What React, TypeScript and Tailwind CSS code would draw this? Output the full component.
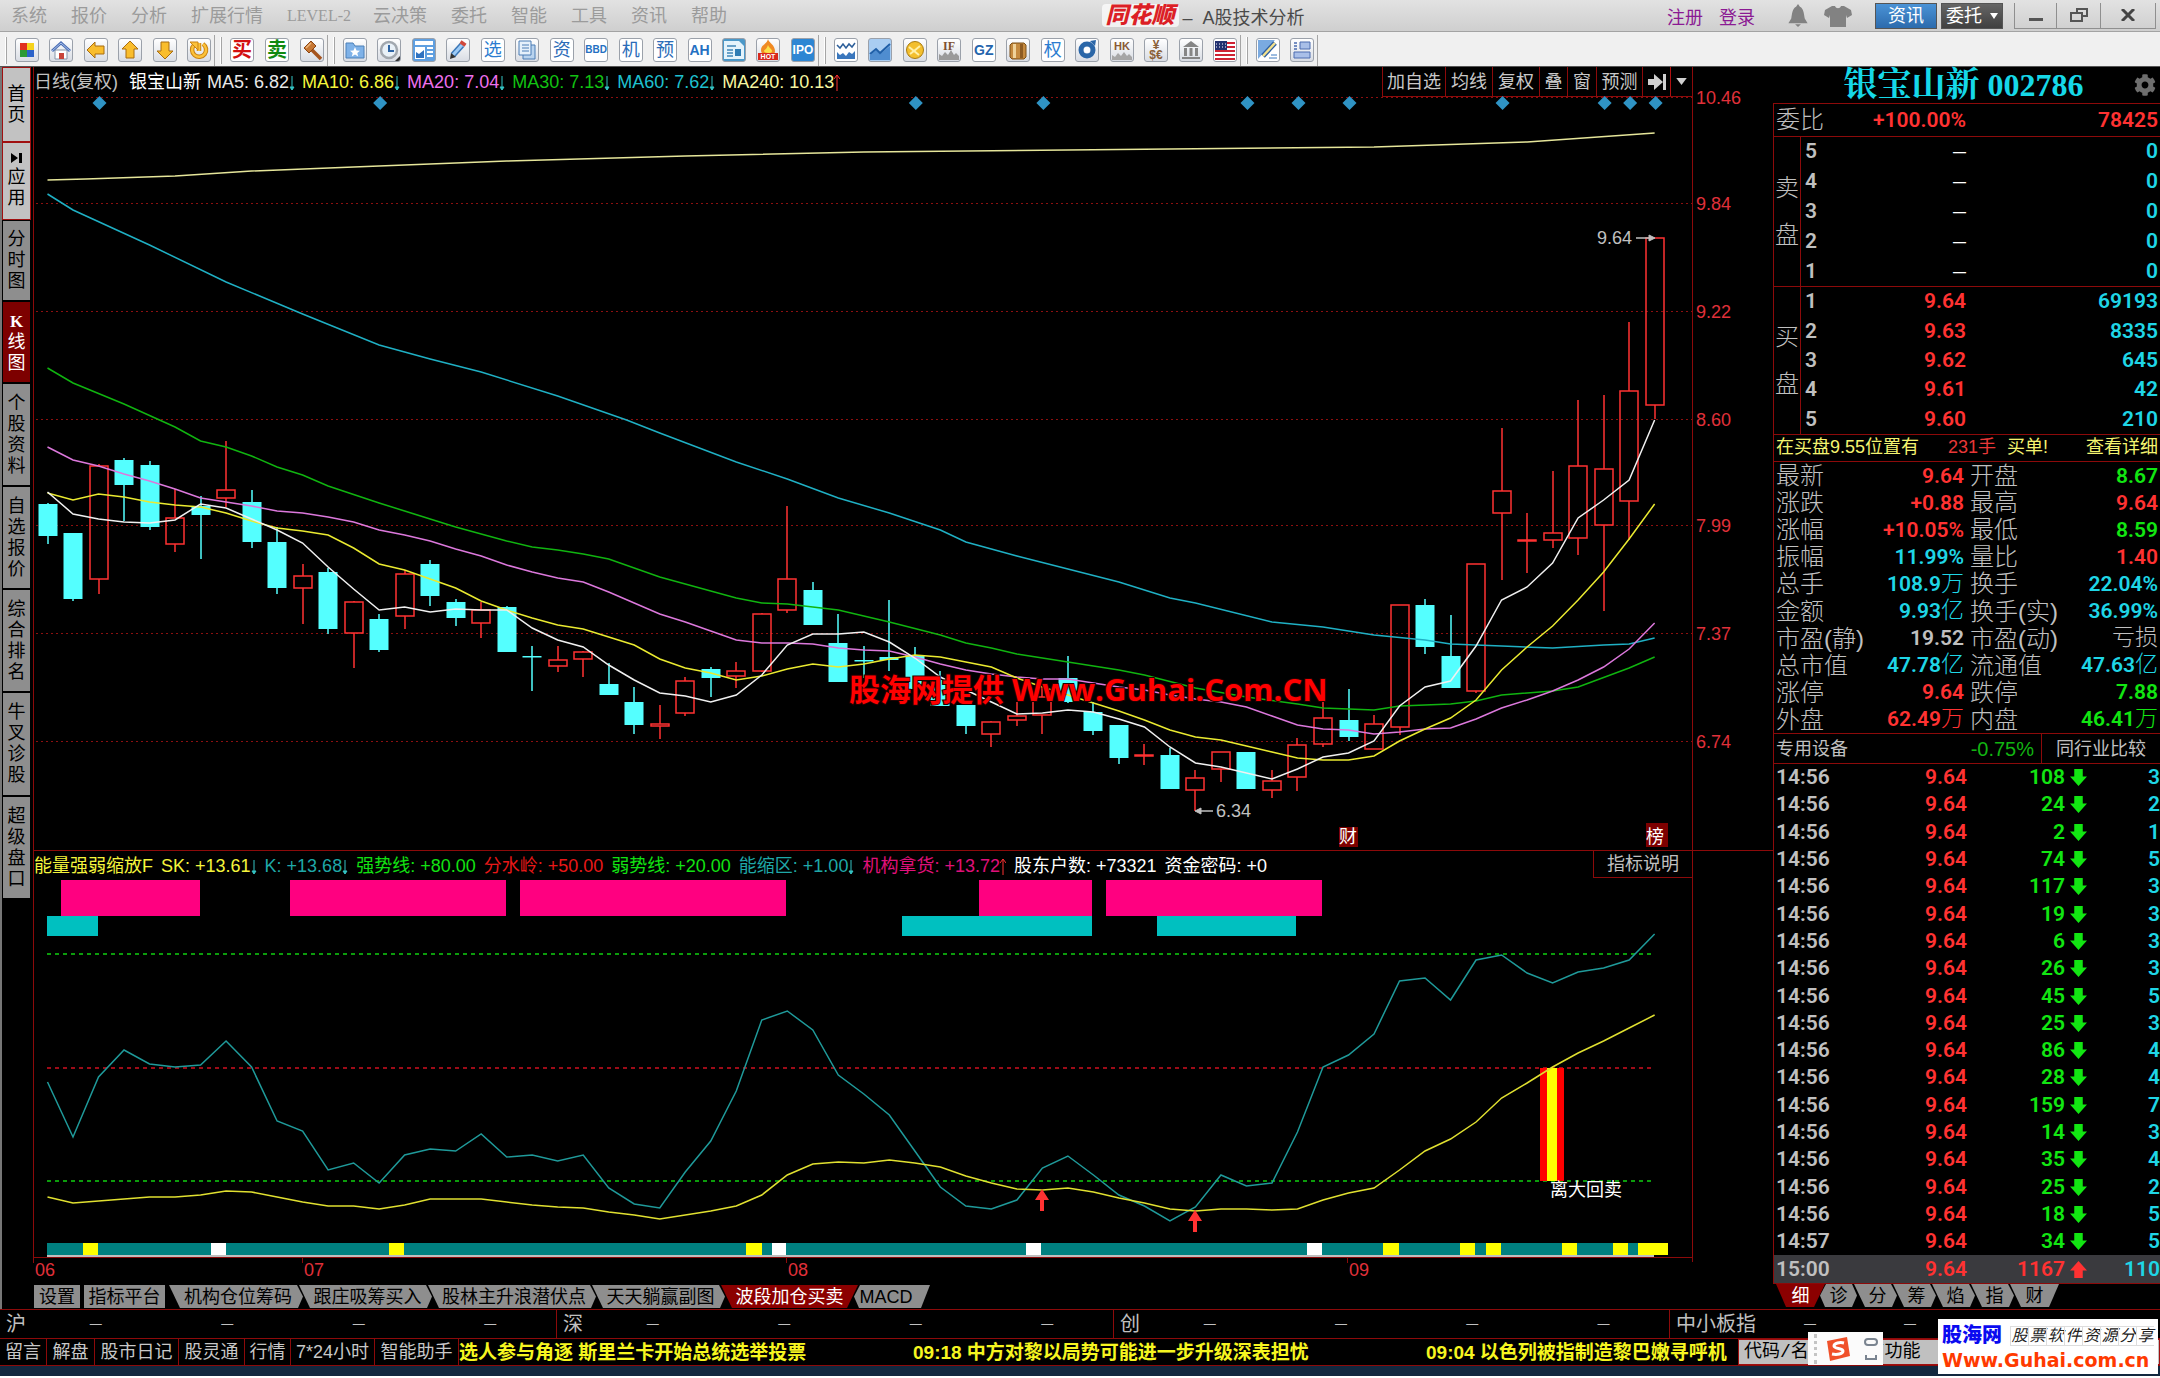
import type { ReactNode } from 'react';
import { FaCog } from 'react-icons/fa';

const SANS = "font-['Liberation_Sans','Noto_Sans_CJK_SC',sans-serif]";
const NUM = "font-['Roboto','Noto_Sans_CJK_SC',sans-serif] font-semibold";

const RED = '#ff3232';
const LINE = '#8c0a0a';

// ---------- chart data ----------
const STEP = 25.51;
const X0 = 47.5;
const cx = (i: number) => X0 + i * STEP;

// [up, high, bodyTop, bodyBottom, low]
const CANDLES: [number, number, number, number, number][] = [
  [0, 503, 504, 536, 544], [0, 533, 533, 599, 601], [1, 464, 466, 579, 594], [0, 458, 460, 485, 521],
  [0, 461, 465, 527, 530], [1, 489, 518, 544, 552], [0, 496, 506, 515, 559], [1, 441, 490, 498, 507],
  [0, 490, 502, 542, 548], [0, 527, 542, 588, 594], [1, 564, 576, 588, 624], [0, 568, 572, 629, 634],
  [1, 601, 602, 633, 668], [0, 614, 619, 650, 652], [1, 570, 574, 616, 629], [0, 560, 564, 596, 606],
  [0, 599, 602, 618, 626], [1, 602, 610, 623, 638], [0, 606, 607, 652, 652], [0, 646, 656, 657, 691],
  [1, 646, 660, 666, 672], [1, 651, 652, 659, 677], [0, 663, 684, 695, 695], [0, 687, 702, 725, 734],
  [1, 705, 724, 726, 739], [1, 677, 681, 713, 716], [0, 667, 669, 678, 697], [1, 662, 671, 676, 688],
  [1, 613, 614, 671, 672], [1, 506, 579, 610, 613], [0, 582, 590, 625, 625], [0, 614, 643, 682, 682],
  [0, 646, 660, 661, 678], [0, 600, 657, 660, 671], [0, 647, 655, 689, 689], [0, 671, 680, 706, 706],
  [0, 702, 705, 726, 734], [1, 721, 722, 734, 747], [1, 702, 716, 720, 726], [1, 686, 697, 715, 734],
  [0, 656, 678, 702, 703], [0, 702, 712, 731, 735], [0, 725, 725, 758, 764], [1, 744, 755, 756, 765],
  [0, 748, 755, 789, 789], [1, 770, 778, 790, 811], [1, 752, 752, 769, 782], [0, 752, 752, 789, 789],
  [1, 770, 781, 790, 798], [1, 738, 745, 777, 791], [1, 698, 718, 744, 747], [0, 689, 720, 737, 741],
  [1, 715, 724, 749, 749], [1, 605, 605, 727, 735], [0, 599, 605, 647, 654], [0, 615, 656, 688, 688],
  [1, 564, 564, 691, 693], [1, 428, 491, 513, 580], [1, 513, 540, 541, 573], [1, 471, 533, 540, 548],
  [1, 400, 466, 538, 555], [1, 395, 469, 525, 611], [1, 322, 391, 501, 540], [1, 238, 238, 405, 419],
];

const MA5 = [492, 514, 519, 522, 523, 520, 504, 508, 519, 530, 543, 567, 589, 610, 607, 612, 609, 610, 610, 628, 640, 647, 665, 680, 693, 696, 702, 695, 675, 645, 634, 634, 632, 642, 658, 677, 690, 702, 714, 713, 710, 712, 719, 727, 747, 763, 767, 773, 779, 769, 757, 753, 741, 706, 687, 681, 646, 600, 587, 563, 518, 500, 480, 420];
const MA10 = [493, 500, 494, 497, 502, 505, 507, 513, 521, 528, 531, 535, 548, 564, 570, 579, 588, 601, 610, 618, 625, 629, 637, 645, 659, 668, 673, 680, 676, 669, 664, 667, 664, 659, 655, 657, 662, 667, 678, 687, 695, 703, 711, 720, 730, 737, 740, 746, 752, 758, 760, 760, 756, 741, 729, 718, 700, 670, 647, 626, 600, 572, 539, 504];
const MA20 = [447, 460, 466, 474, 481, 489, 498, 502, 506, 511, 513, 517, 522, 530, 535, 541, 549, 556, 565, 572, 578, 582, 592, 603, 614, 622, 631, 640, 643, 643, 644, 648, 650, 651, 657, 664, 670, 674, 677, 679, 679, 683, 687, 690, 695, 699, 702, 707, 716, 725, 729, 730, 734, 732, 729, 728, 719, 708, 700, 691, 680, 667, 649, 623];
const MA30: [number, number][] = [[0, 368], [1, 383], [3, 404], [5, 427], [6, 441], [7, 447], [8, 456], [9, 467], [10, 475], [11, 486], [13, 503], [14, 511], [16, 527], [18, 541], [19, 547], [20, 550], [21, 554], [22, 559], [24, 577], [26, 591], [27, 598], [28, 603], [29, 604], [30, 607], [31, 610], [33, 622], [35, 635], [36, 643], [37, 648], [38, 654], [40, 662], [42, 670], [43, 675], [45, 688], [47, 697], [49, 704], [50, 708], [52, 710], [53, 706], [55, 704], [56, 701], [57, 695], [59, 691], [60, 687], [62, 668], [63, 657]];
const MA60: [number, number][] = [[0, 194], [1, 210], [4, 245], [7, 282], [10, 314], [13, 345], [15, 359], [17, 372], [20, 396], [22.7, 420], [24, 433], [27, 462], [29, 479], [31, 498], [33, 513], [35, 530], [36, 542], [38, 556], [40, 569], [42, 582], [44, 598], [45, 603], [48, 622], [50, 627], [52, 635], [54, 640], [55, 644], [57, 646], [59, 648], [61, 645], [62, 644], [63, 638]];
const MA240: [number, number][] = [[0, 180], [1.5, 179], [5, 176], [8, 171], [12, 167], [18, 161], [25, 156], [32, 152], [44, 149], [52, 147], [58, 142], [63, 133]];

const K = [1083, 1138, 1078, 1051, 1065, 1068, 1066, 1042, 1068, 1122, 1132, 1171, 1164, 1184, 1156, 1150, 1152, 1135, 1158, 1156, 1162, 1156, 1189, 1205, 1209, 1173, 1142, 1092, 1021, 1012, 1031, 1076, 1095, 1116, 1152, 1188, 1207, 1210, 1201, 1169, 1157, 1176, 1196, 1207, 1222, 1208, 1176, 1187, 1184, 1133, 1068, 1056, 1035, 982, 979, 1001, 961, 956, 974, 984, 973, 969, 961, 935];
const SK = [1198, 1204, 1202, 1200, 1198, 1198, 1196, 1192, 1193, 1198, 1203, 1207, 1207, 1210, 1206, 1200, 1200, 1200, 1203, 1206, 1208, 1209, 1213, 1216, 1220, 1216, 1212, 1207, 1196, 1176, 1165, 1163, 1164, 1161, 1164, 1168, 1177, 1184, 1190, 1191, 1189, 1193, 1199, 1204, 1210, 1212, 1210, 1210, 1211, 1210, 1201, 1194, 1189, 1171, 1152, 1140, 1123, 1099, 1084, 1068, 1054, 1042, 1029, 1016];

const AXIS: [string, number][] = [['10.46', 97], ['9.84', 203], ['9.22', 311], ['8.60', 419], ['7.99', 525], ['7.37', 633], ['6.74', 741]];
const DIAMONDS = [2, 13, 34, 39, 47, 49, 51, 57, 61, 62, 63];

const PINK = [[61, 200], [290, 506], [520, 786], [979, 1092], [1106, 1322]];
const TEAL = [[47, 98], [902, 1092], [1157, 1296]];
const YELLOW_MARKS = [[83, 98], [389, 404], [746, 762], [1383, 1399], [1460, 1475], [1486, 1501], [1562, 1577], [1613, 1628], [1638, 1668]];
const WHITE_MARKS = [[211, 226], [772, 786], [1026, 1041], [1307, 1322]];
const MONTHS: [string, number][] = [['06', 34], ['07', 303], ['08', 787], ['09', 1348]];

const pts = (ys: number[]) => ys.map((y, i) => `${cx(i)},${y}`).join(' ');
const ptsXY = (a: [number, number][]) => a.map(([i, y]) => `${cx(i)},${y}`).join(' ');

// ---------- title bar ----------
const MENU = ['系统', '报价', '分析', '扩展行情', 'LEVEL-2', '云决策', '委托', '智能', '工具', '资讯', '帮助'];

function TitleBar() {
  return (
    <header className="flex h-8 items-center border-b border-[#a3a3a3] bg-gradient-to-b from-[#e2e2e2] to-[#cfcfcf] text-[18px] leading-none">
      <nav className="flex w-[51%] gap-6 pl-[11px] text-[#9b9b9b]">
        {MENU.map((m) => (
          <button key={m} className={m === 'LEVEL-2' ? "w-[62px] whitespace-nowrap font-['Liberation_Serif',serif] text-[16px]" : 'whitespace-nowrap'}>
            {m}
          </button>
        ))}
      </nav>
      <div className="flex flex-1 items-center text-[#4a4a4a]">
        <span className="rounded-sm bg-white/70 px-1 text-[23px] font-black italic text-[#dc1f26]">同花顺</span>
        <span className="ml-1 whitespace-nowrap pt-1">– &nbsp;A股技术分析</span>
      </div>
      <div className="flex h-full items-center pr-1">
        <a href="#" className="mr-4 pt-1 text-[#8b1a93]">注册</a>
        <a href="#" className="mr-8 pt-1 text-[#8b1a93]">登录</a>
        <button aria-label="消息" className="mr-[14px]">
          <svg viewBox="0 0 22 26" className="block h-[25px] w-[22px] fill-[#828282]">
            <path d="M11 1l2 3c4 2 4 7 5 12l3 5H1l3-5c1-5 1-10 5-12z" />
            <path d="M8 22h6l-3 3z" />
          </svg>
        </button>
        <button aria-label="皮肤" className="mr-[22px]">
          <svg viewBox="0 0 30 24" className="block h-6 w-[30px] fill-[#828282]">
            <path d="M9 2h3c1 3 5 3 6 0h3l7 4 1 5-5 3-1-3v12H7V11l-1 3-5-3 1-5z" />
          </svg>
        </button>
        <button className="mr-1 h-[26px] w-[62px] border border-[#555] bg-gradient-to-b from-[#4b93d6] to-[#2c6bad] text-white">资讯</button>
        <button className="mr-[11px] flex h-[26px] w-[62px] items-center justify-center gap-2 border border-[#555] bg-gradient-to-b from-[#666] to-[#404040] text-white">
          委托
          <svg viewBox="0 0 8 6" className="h-[6px] w-2 fill-white"><path d="M0 0h8L4 6z" /></svg>
        </button>
        <div className="flex h-[26px] border-x border-b border-[#8f8f8f] text-[#444]">
          <button aria-label="最小化" className="flex w-[42px] items-center justify-center border-r border-[#8f8f8f]">
            <span className="mt-2 h-[3px] w-[14px] bg-[#555]" />
          </button>
          <button aria-label="还原" className="flex w-[44px] items-center justify-center border-r border-[#8f8f8f]">
            <svg viewBox="0 0 18 14" className="h-[14px] w-[18px] fill-none stroke-[#555] stroke-2"><path d="M7 5V1h10v7h-4M1 5h11v8H1z" /></svg>
          </button>
          <button aria-label="关闭" className="flex w-[54px] items-center justify-center">
            <svg viewBox="0 0 14 12" className="h-3 w-[14px] fill-none stroke-[#444] stroke-3"><path d="M1 0l12 12M13 0L1 12" /></svg>
          </button>
        </div>
      </div>
    </header>
  );
}

// ---------- icon toolbar ----------
function Tool({ label, children, tint }: { label: string; children: ReactNode; tint?: string }) {
  return (
    <button
      aria-label={label}
      className={`flex h-6 w-6 shrink-0 items-center justify-center overflow-hidden rounded-[3px] border border-[#9ba1aa] ${tint ?? 'bg-gradient-to-b from-white to-[#d9dde4]'}`}
    >
      {children}
    </button>
  );
}

function Ico({ children }: { children: ReactNode }) {
  return <svg viewBox="0 0 22 22" className="h-[22px] w-[22px] shrink-0 fill-none">{children}</svg>;
}

function ToolGroup({ width, children }: { width: string; children: ReactNode }) {
  return (
    <div className="flex h-[31px] items-center border-r border-[#a5a5a5] pr-[3px]">
      <span className="mr-2 ml-[5px] h-[27px] w-[2px] border-r border-[#a5a5a5] bg-white" />
      <div className={`flex justify-between ${width}`}>{children}</div>
    </div>
  );
}

function Char({ color, children }: { color: string; children: ReactNode }) {
  return <span className={`text-[18px] leading-none ${color}`}>{children}</span>;
}

function Toolbar() {
  const arrow = { fill: '#f9bd2d', stroke: '#a86c10', strokeWidth: 1 };
  return (
    <div className="flex h-[35px] items-center border-b border-[#555] bg-[#f0f0f0] pt-[2px]">
      <ToolGroup width="w-[196px]">
        <Tool label="板块">
          <Ico>
            <path fill="#e03020" d="M4 4h7v7H4z" /><path fill="#f5d21c" d="M11 4h7v7h-7z" />
            <path fill="#2c9a35" d="M4 11h7v7H4z" /><path fill="#2b62c9" d="M11 11h7v7h-7z" />
          </Ico>
        </Tool>
        <Tool label="首页">
          <Ico>
            <path fill="#fff" stroke="#8594a8" d="M5 11h12v9H5z" /><path fill="#c8443a" d="M9 14h5v6H9z" />
            <path stroke="#4c6fb5" strokeWidth="3" d="M2 12l9-8 9 8" /><path stroke="#a8c0ea" d="M2 12l9-8 9 8" />
          </Ico>
        </Tool>
        <Tool label="后退"><Ico><path {...arrow} d="M2 11l8-8v4h9v8h-9v4z" /></Ico></Tool>
        <Tool label="上页"><Ico><path {...arrow} d="M11 2l8 8h-4v9H7v-9H3z" /></Ico></Tool>
        <Tool label="下页"><Ico><path {...arrow} d="M11 20l-8-8h4V3h8v9h4z" /></Ico></Tool>
        <Tool label="刷新">
          <Ico>
            <path stroke="#c98314" strokeWidth="4.5" d="M6 6a7 7 0 1 0 9-1M11 4v8" /><path stroke="#fcc23a" strokeWidth="2.5" d="M6 6a7 7 0 1 0 9-1M11 4v8" />
            <path fill="#fcc23a" stroke="#c98314" d="M2 3h8v8z" />
          </Ico>
        </Tool>
      </ToolGroup>
      <ToolGroup width="w-[94px]">
        <Tool label="买入" tint="bg-white"><span className="text-[20px] leading-none font-bold text-[#d31010]">买</span></Tool>
        <Tool label="卖出" tint="bg-white"><span className="text-[20px] leading-none font-bold text-[#118a11]">卖</span></Tool>
        <Tool label="交易">
          <Ico>
            <path stroke="#a5541e" strokeWidth="3.5" d="M10 10l10 10" /><path fill="#c77835" stroke="#8a4413" d="M3 9l7-7 5 5-7 7z" />
            <path stroke="#f0b87c" strokeWidth="1.5" d="M5 9l5-5" />
          </Ico>
        </Tool>
      </ToolGroup>
      <ToolGroup width="w-[472px]">
        <Tool label="自选">
          <Ico>
            <path fill="#7fb2e8" stroke="#4c80b8" d="M2 4h7l2 3h9v12H2z" />
            <path fill="#fff" d="M11 8l1.500 3.500 3.500.3-2.700 2.300.9 3.400-3.200-1.900-3.200 1.900.9-3.400L6 11.800l3.500-.3z" />
          </Ico>
        </Tool>
        <Tool label="分时">
          <Ico><circle cx="11" cy="11" r="8" fill="#e9f1f8" stroke="#a2a8af" strokeWidth="2.500" /><path stroke="#2d64a5" strokeWidth="2" d="M11 6v6h5" /><path fill="#333" d="M22 17v5h-5z" /></Ico>
        </Tool>
        <Tool label="报表" tint="bg-[#5f9fe0]">
          <Ico><path fill="#fff" d="M2 2h18v4H2zM2 8h10v12H2zM14 8h6v2h-6zM14 12h6v2h-6zM14 16h6v2h-6z" /><path fill="#2f72c0" d="M3 13l3 2 5-4v8H3z" /></Ico>
        </Tool>
        <Tool label="画线">
          <Ico><path stroke="#3c78b8" strokeWidth="6" d="M6 16L15 6" /><path stroke="#9dcbf6" strokeWidth="3" d="M6 16L15 6" /><path stroke="#d0483c" strokeWidth="6" d="M15 6l2-3" /><path fill="#333" d="M3 20l1-6 5 4z" /></Ico>
        </Tool>
        <Tool label="选股" tint="bg-white"><Char color="text-[#2b7cd0]">选</Char></Tool>
        <Tool label="公告">
          <Ico><path fill="#b9d3ee" stroke="#4a7db5" d="M7 6h12v14H7z" /><path fill="#e5f0fb" stroke="#4a7db5" d="M3 2h12v14H3z" /><path stroke="#4a7db5" d="M6 6h7M6 9h7M6 12h7" /></Ico>
        </Tool>
        <Tool label="资金" tint="bg-white"><Char color="text-[#2b6cb8]">资</Char></Tool>
        <Tool label="BBD" tint="bg-white">
          <span className="text-[10px] leading-none font-bold text-[#2470c2]">BBD</span>
        </Tool>
        <Tool label="机构" tint="bg-white"><Char color="text-[#2b6cb8]">机</Char></Tool>
        <Tool label="预测" tint="bg-white"><Char color="text-[#2b6cb8]">预</Char></Tool>
        <Tool label="AH" tint="bg-white"><span className="text-[14px] leading-none font-bold text-[#2470c2]">AH</span></Tool>
        <Tool label="新闻" tint="bg-[#4b98c8]">
          <Ico><path fill="#e4f3fb" d="M1 2h15l5 5v13H1z" /><path stroke="#3f86b8" strokeWidth="1.500" d="M4 7h9M4 11h6M4 14h6M4 17h6" /><path fill="#2f7db4" d="M12 10h6v7h-6z" /></Ico>
        </Tool>
        <Tool label="热点">
          <svg viewBox="0 0 22 22" className="h-[22px] w-[22px]">
            <path fill="#f08a24" d="M11 0c1 4 7 6 7 12 0 3-2 4-7 4s-7-2-7-5c0-5 6-6 7-11z" /><path fill="#fce04a" d="M11 6c1 3 4 4 4 6s-2 2-4 2-4-1-4-2 3-2 4-6z" />
            <path fill="#d8281c" d="M1 14h20v7H1z" /><text x="11" y="20" textAnchor="middle" fontSize="7" fontWeight="700" fill="#fff">HOT</text>
          </svg>
        </Tool>
        <Tool label="新股" tint="bg-[#2d86d3]"><span className="text-[12px] leading-none font-bold text-white">IPO</span></Tool>
      </ToolGroup>
      <ToolGroup width="w-[403px]">
        <Tool label="大盘" tint="bg-white">
          <Ico><path stroke="#2d5f9a" strokeWidth="1.500" d="M2 6l3 3 3-4 3 4 3-4 3 3 3-4" /><path fill="#3a77bd" d="M2 20v-7l3 3 3-2 3 3 3-4 3 2 3-3v8z" /></Ico>
        </Tool>
        <Tool label="走势" tint="bg-[#a9cdf2]">
          <Ico><path fill="#4f8dd0" d="M1 21v-5l6-5 4 4 10-8v14z" /><path stroke="#1f5fa8" strokeWidth="2" d="M1 15l6-5 4 4L21 5" /></Ico>
        </Tool>
        <Tool label="期货"><Ico><circle cx="11" cy="11" r="8.500" fill="#f3bf2e" stroke="#a87b12" /><path stroke="#fff0a8" strokeWidth="2" d="M5 8l5 4 6-5M6 15l4-3 5 4" /></Ico></Tool>
        <Tool label="股指">
          <svg viewBox="0 0 22 22" className="h-[22px] w-[22px]"><path fill="#9a9a9a" d="M1 21v-6l3 2 3-4 3 3 3-5 3 5 2-2 3 3v4z" /><text x="11" y="11" textAnchor="middle" fontSize="12" fontWeight="700" fontFamily="Liberation Serif" fill="#7d5030">IF</text></svg>
        </Tool>
        <Tool label="国债" tint="bg-white"><span className="text-[14px] leading-none font-bold text-[#2465ad]">GZ</span></Tool>
        <Tool label="商品"><Ico><path fill="#c58a3f" stroke="#7c5018" d="M5 4h12l2 2v12l-2 2H5l-2-2V6z" /><path fill="#efd29a" d="M6 5h3v14H6z" /><path fill="#8d5b22" d="M13 5h3v14h-3z" /></Ico></Tool>
        <Tool label="期权" tint="bg-white"><Char color="text-[#2b7cd0]">权</Char></Tool>
        <Tool label="基金"><Ico><circle cx="11" cy="11" r="6" stroke="#2a66a8" strokeWidth="5" /><circle cx="11" cy="11" r="3" fill="#fff" /><path fill="#2a66a8" d="M14 2l6-1-1 6z" /></Ico></Tool>
        <Tool label="港股">
          <svg viewBox="0 0 22 22" className="h-[22px] w-[22px]"><path fill="#a6a6a6" d="M1 21v-5l3 2 3-4 3 3 3-4 3 4 2-2 3 3v3z" /><text x="11" y="11" textAnchor="middle" fontSize="11" fontWeight="700" fill="#8a5a34">HK</text></svg>
        </Tool>
        <Tool label="外汇">
          <svg viewBox="0 0 22 22" className="h-[22px] w-[22px]"><g textAnchor="middle" fontSize="12" fontWeight="700" fill="#8a6038"><text x="11" y="10">¥</text><text x="11" y="20">$€</text></g></svg>
        </Tool>
        <Tool label="宏观"><Ico><path fill="#868686" d="M11 2l8 6H3zM4 9h3v8H4zM9.500 9h3v8h-3zM15 9h3v8h-3zM2 18h18v2H2z" /></Ico></Tool>
        <Tool label="美股" tint="bg-white">
          <Ico><path stroke="#cf2233" strokeWidth="2" d="M1 4h20M1 8h20M1 12h20M1 16h20M1 20h20" /><path fill="#22316f" d="M1 2h12v9H1z" /><path stroke="#fff" strokeDasharray="1 2" d="M2 5h10M2 8h10" /></Ico>
        </Tool>
      </ToolGroup>
      <ToolGroup width="w-[58px]">
        <Tool label="公式" tint="bg-white">
          <Ico><path fill="#7aaae0" d="M1 1h17L1 20z" /><path stroke="#2d5fa2" strokeWidth="5" d="M6 17L18 4" /><path stroke="#f2e08c" strokeWidth="2.500" d="M6 17L18 4" /><path stroke="#3a78c0" d="M12 19h8M14 16h6" /></Ico>
        </Tool>
        <Tool label="版面">
          <Ico><path stroke="#4c6cb0" strokeWidth="1.500" d="M3 4h3M3 7h3M3 10h3" /><path fill="#a9bfe8" stroke="#4c6cb0" d="M9 3h10v7H9zM3 13h16v6H3z" /></Ico>
        </Tool>
      </ToolGroup>
    </div>
  );
}

// ---------- left side tabs ----------
const SIDE: { text: string; cls: string }[] = [
  { text: '首页', cls: 'h-[75px] border-[#a01010] bg-[#c2c2c2] text-black' },
  { text: '应用', cls: 'h-[78px] border-[#a01010] bg-[#c2c2c2] text-black' },
  { text: '分时图', cls: 'h-[81px] border-black bg-[#8e8e8e] text-black' },
  { text: '线图', cls: 'h-[82px] border-black bg-[#7d0000] text-white' },
  { text: '个股资料', cls: 'h-[103px] border-black bg-[#8e8e8e] text-black' },
  { text: '自选报价', cls: 'h-[103px] border-black bg-[#8e8e8e] text-black' },
  { text: '综合排名', cls: 'h-[103px] border-black bg-[#8e8e8e] text-black' },
  { text: '牛叉诊股', cls: 'h-[104px] border-black bg-[#8e8e8e] text-black' },
  { text: '超级盘口', cls: 'h-[103px] border-black bg-[#8e8e8e] text-black' },
];

function SideTabs() {
  return (
    <nav className="w-[33px] shrink-0 border-l-2 border-[#777] pr-[2px]">
      {SIDE.map((s) => (
        <button key={s.text} className={`flex w-full flex-col items-center justify-center border text-[18px] leading-[21px] ${s.cls}`}>
          {s.text === '线图' && <span className="font-['Liberation_Serif',serif] text-[17px] font-bold">K</span>}
          {s.text === '应用' && (
            <svg viewBox="0 0 12 10" className="mb-1 h-[10px] w-3 fill-black"><path d="M0 0l7 5-7 5zM8 0h3v10H8z" /></svg>
          )}
          <span className="w-[18px] break-all">{s.text}</span>
        </button>
      ))}
    </nav>
  );
}

// ---------- centre ----------
function Down() {
  return <svg viewBox="0 0 6 18" className="h-[18px] w-[6px] shrink-0 fill-none stroke-[#35c4c4]"><path d="M3 3v12" /><path fill="#35c4c4" d="M1 14h4l-2 3z" /></svg>;
}

function Up() {
  return <svg viewBox="0 0 6 18" className="h-[18px] w-[6px] shrink-0 fill-none stroke-[#ff3232]"><path d="M3 2v16M0 6l3-4 3 4" /></svg>;
}

const MAS = [
  { t: 'MA5: 6.82', c: 'text-[#e8e8e8]' },
  { t: 'MA10: 6.86', c: 'text-[#f5f53c]' },
  { t: 'MA20: 7.04', c: 'text-[#ee70ee]' },
  { t: 'MA30: 7.13', c: 'text-[#12c212]' },
  { t: 'MA60: 7.62', c: 'text-[#1fc0cf]' },
  { t: 'MA240: 10.13', c: 'text-[#f6f6a0]' },
];

const CHART_BTNS = [
  { t: '加自选', w: 'w-[63px]' }, { t: '均线', w: 'w-[47px]' }, { t: '复权', w: 'w-[47px]' },
  { t: '叠', w: 'w-[28px]' }, { t: '窗', w: 'w-[29px]' }, { t: '预测', w: 'w-[46px]' },
];

function ChartHeader() {
  return (
    <div className="mr-[80px] flex h-[30px] items-center border-x border-[#8c0a0a] whitespace-nowrap">
      <span className="text-[#c0c0c0]">日线(复权)</span>
      <span className="mr-[6px] ml-[11px] text-white">银宝山新</span>
      <div className="flex gap-[7px]">
        {MAS.map((m, i) => (
          <span key={m.t} className={`flex items-center ${m.c}`}>
            {m.t}
            {i < 5 ? <Down /> : <Up />}
          </span>
        ))}
      </div>
      <div className="ml-auto flex h-full border-b border-[#8c0a0a] text-[#c8c8c8]">
        {CHART_BTNS.map((b) => (
          <button key={b.t} className={`border-l border-[#8c0a0a] ${b.w}`}>{b.t}</button>
        ))}
        <button aria-label="末页" className="flex w-[28px] items-center justify-center border-l border-[#8c0a0a]">
          <svg viewBox="0 0 20 20" className="h-5 w-5 fill-[#d0d0d0]"><path d="M1 7h6V2l9 8-9 8v-5H1zM16 2h3v16h-3z" /></svg>
        </button>
        <button aria-label="更多" className="flex w-[22px] items-center justify-center border-l border-[#b01010]">
          <svg viewBox="0 0 12 8" className="h-[7px] w-[11px] fill-[#d0d0d0]"><path d="M0 0h12L6 8z" /></svg>
        </button>
      </div>
    </div>
  );
}

function KChart() {
  return (
    <svg viewBox="33 97 1740 753" className="block h-auto w-full overflow-visible" fontFamily="Liberation Sans, Noto Sans CJK SC, sans-serif" fontSize="18">
      <path d="M33.500 97V850M1692.500 97V850" stroke={LINE} />
      {AXIS.map(([t, y]) => (
        <g key={t}>
          <path d={`M36 ${y + 0.5}H1692`} stroke="#8c1010" strokeDasharray="2 3" />
          <text x="1696" y={y + 7} fill="#e0303a">{t}</text>
        </g>
      ))}
      {DIAMONDS.map((i) => (
        <path key={i} d={`M${cx(i) + 1} 96l7 7-7 7-7-7z`} fill="#2f93c4" />
      ))}
      {CANDLES.map(([up, h, t, b, l], i) => {
        const x = Math.round(cx(i));
        return up ? (
          <g key={i} stroke={RED} strokeWidth="1.500" fill="none">
            <path d={`M${x} ${h}V${t}M${x} ${b}V${l}`} />
            <rect x={x - 9} y={t} width="18" height={b - t} />
          </g>
        ) : (
          <g key={i} fill="#54ffff">
            <rect x={x - 0.75} y={h} width="1.500" height={l - h} />
            <rect x={x - 9.500} y={t} width="19" height={Math.max(b - t, 1.5)} />
          </g>
        );
      })}
      <g fill="none" strokeWidth="1.500">
        <polyline points={ptsXY(MA240)} stroke="#e6e69a" />
        <polyline points={ptsXY(MA60)} stroke="#1fb0c4" />
        <polyline points={ptsXY(MA30)} stroke="#10b410" />
        <polyline points={pts(MA20)} stroke="#dc78dc" />
        <polyline points={pts(MA10)} stroke="#eaea30" />
        <polyline points={pts(MA5)} stroke="#f0f0f0" />
      </g>
      <g fill="#c0c0c0" stroke="#c0c0c0">
        <path d="M1636 238h14M1197 811h16" strokeWidth="1.500" />
        <path d="M1655 238l-6-3v6zM1195 811l6-3v6z" />
      </g>
      <text x="1597" y="244" fill="#c0c0c0">9.64</text>
      <text x="1216" y="817" fill="#c0c0c0">6.34</text>
      <rect x="1339" y="827" width="19" height="20" fill="#7d0000" />
      <text x="1339" y="843" fill="#fff">财</text>
      <rect x="1646" y="823" width="22" height="24" fill="#7d0000" />
      <text x="1646" y="843" fill="#fff">榜</text>
      <text x="849" y="701" fontSize="31" fontWeight="700" fill="#ff0000" stroke="#200000" strokeWidth="2" paintOrder="stroke" fontFamily="Open Sans, Noto Sans CJK SC, sans-serif">
        股海网提供 Www.Guhai.Com.CN
      </text>
    </svg>
  );
}

const IND: { t: string; c: string; a?: string }[] = [
  { t: '能量强弱缩放F', c: 'text-[#f5f53c]' },
  { t: 'SK: +13.61', c: 'text-[#f5f53c]', a: 'd' },
  { t: 'K: +13.68', c: 'text-[#1fa8a8]', a: 'd' },
  { t: '强势线: +80.00', c: 'text-[#12e212]' },
  { t: '分水岭: +50.00', c: 'text-[#e81818]' },
  { t: '弱势线: +20.00', c: 'text-[#12e212]' },
  { t: '能缩区: +1.00', c: 'text-[#1fa8a8]', a: 'd' },
  { t: '机构拿货: +13.72', c: 'text-[#e0107a]', a: 'u' },
  { t: '股东户数: +73321', c: 'text-white' },
  { t: '资金密码: +0', c: 'text-white' },
];

function IndicatorHeader() {
  return (
    <div className="border-t border-[#8c0a0a]">
      <div className="mr-[80px] flex h-[29px] items-center gap-2 border-x border-[#8c0a0a] whitespace-nowrap">
        {IND.map((m) => (
          <span key={m.t} className={`flex items-center ${m.c}`}>
            {m.t}
            {m.a === 'd' && <Down />}
            {m.a === 'u' && <Up />}
          </span>
        ))}
        <button className="ml-auto h-[27px] w-[99px] self-start border-b border-l border-[#8c0a0a] text-[#c0c0c0]">指标说明</button>
      </div>
    </div>
  );
}

function IndicatorChart() {
  return (
    <svg viewBox="33 881 1740 405" className="block h-auto w-full" fontFamily="Liberation Sans, Noto Sans CJK SC, sans-serif" fontSize="18">
      <path d="M33.500 881V1263M1692.500 881V1263M33 1258.500H1693" stroke={LINE} />
      {PINK.map(([a, b]) => <rect key={a} x={a} y="881" width={b - a} height="36" fill="#ff0080" />)}
      {TEAL.map(([a, b]) => <rect key={a} x={a} y="917" width={b - a} height="20" fill="#00c0c0" />)}
      <g strokeDasharray="4 4" strokeWidth="1.500">
        <path d="M47 955H1654" stroke="#10d010" />
        <path d="M47 1069H1654" stroke="#d01020" />
        <path d="M47 1182H1654" stroke="#10d010" />
      </g>
      <rect x="1540" y="1069" width="24" height="113" fill="#ff0000" />
      <rect x="1547" y="1069" width="10" height="113" fill="#ffff00" />
      <g fill="none" strokeWidth="1.500">
        <polyline points={pts(K)} stroke="#1f9a9a" />
        <polyline points={pts(SK)} stroke="#e0e030" />
      </g>
      <path d="M1042 1190l7 11h-5v11h-4v-11h-5zM1195 1211l7 11h-5v11h-4v-11h-5z" fill={RED} />
      <text x="1550" y="1197" fill="#fff">离大回卖</text>
      <rect x="47" y="1244" width="1621" height="12" fill="#008080" />
      {YELLOW_MARKS.map(([a, b]) => <rect key={a} x={a} y="1244" width={b - a} height="12" fill="#ffff00" />)}
      {WHITE_MARKS.map(([a, b]) => <rect key={a} x={a} y="1244" width={b - a} height="12" fill="#fff" />)}
      <path d="M47 1257H1654" stroke="#fff" strokeWidth="1.500" />
      {MONTHS.map(([t, x]) => (
        <g key={t}>
          <path d={`M${x - 0.5} 1258v6`} stroke={LINE} />
          <text x={x + 1} y="1277" fill="#e0303a">{t}</text>
        </g>
      ))}
    </svg>
  );
}

const SLANT = '[clip-path:polygon(0_0,calc(100%-6px)_0,100%_50%,calc(100%-5px)_100%,11px_100%)]';
const TABS = [
  { t: '机构仓位筹码', w: 'w-[134px]' },
  { t: '跟庄吸筹买入', w: 'w-[133px]' },
  { t: '股林主升浪潜伏点', w: 'w-[168px]' },
  { t: '天天躺赢副图', w: 'w-[133px]' },
];

function FormulaTabs() {
  return (
    <div className="flex h-[23px] pl-[1px] text-black">
      <button className="mr-1 w-[46px] bg-[#8e8e8e]">设置</button>
      <button className="mr-[4px] w-[81px] bg-[#8e8e8e]">指标平台</button>
      {TABS.map((t) => (
        <button key={t.t} className={`-mr-1 bg-[#8e8e8e] pl-1 whitespace-nowrap ${t.w} ${SLANT}`}>{t.t}</button>
      ))}
      <button className="w-[137px] bg-[#8b0000] text-white [clip-path:polygon(0_0,100%_0,calc(100%-11px)_100%,11px_100%)]">波段加仓买卖</button>
      <button className="-ml-1 w-[76px] bg-[#8e8e8e] pr-3 [clip-path:polygon(6px_0,100%_0,calc(100%-9px)_100%,5px_100%,0_50%)]">MACD</button>
    </div>
  );
}

// ---------- right panel ----------
const SELL = ['5', '4', '3', '2', '1'].map((n) => [n, '—', '0']);
const BUY = [['1', '9.64', '69193'], ['2', '9.63', '8335'], ['3', '9.62', '645'], ['4', '9.61', '42'], ['5', '9.60', '210']];

function Book({ side, rows, height }: { side: string; rows: string[][]; height: string }) {
  return (
    <div className={`flex border-t border-[#8c0a0a] ${height}`}>
      <div className="flex w-[27px] flex-col items-center justify-center gap-[23px] border-r border-[#8c0a0a] text-[24px] leading-6 font-light text-[#c0c0c0]">
        {side.split('').map((c) => <span key={c}>{c}</span>)}
      </div>
      <table className={`h-full flex-1 table-fixed text-[21px] leading-[27px] ${NUM}`}>
        <tbody>
          {rows.map(([n, p, v]) => (
            <tr key={n}>
              <td className="w-[40px] py-0 pl-1 text-[#c0c0c0]">{n}</td>
              {p === '—' ? (
                <td className="w-[125px] text-right font-['Liberation_Sans',sans-serif] text-[13px] text-white">{p}</td>
              ) : (
                <td className="w-[125px] text-right text-[#ff3232]">{p}</td>
              )}
              <td className="pr-[2px] text-right text-[#1fd6e6]">{v}</td>
            </tr>
          ))}
        </tbody>
      </table>
    </div>
  );
}

const R = 'text-[#ff3232]';
const G = 'text-[#12e612]';
const C = 'text-[#1fd6e6]';
const W = 'text-[#c0c0c0]';
const STATS: [string, string, string, string, string, string][] = [
  ['最新', '9.64', R, '开盘', '8.67', G],
  ['涨跌', '+0.88', R, '最高', '9.64', R],
  ['涨幅', '+10.05%', R, '最低', '8.59', G],
  ['振幅', '11.99%', C, '量比', '1.40', R],
  ['总手', '108.9万', C, '换手', '22.04%', C],
  ['金额', '9.93亿', C, '换手(实)', '36.99%', C],
  ['市盈(静)', '19.52', W, '市盈(动)', '亏损', W],
  ['总市值', '47.78亿', C, '流通值', '47.63亿', C],
  ['涨停', '9.64', R, '跌停', '7.88', G],
  ['外盘', '62.49万', R, '内盘', '46.41万', G],
];

function Value({ v }: { v: string }) {
  const m = v.match(/^([\d.+%-]*)(.*)$/);
  return (
    <>
      <span className={NUM}>{m?.[1]}</span>
      <span className="text-[23px] leading-none font-light">{m?.[2]}</span>
    </>
  );
}

const VOLS = [[108, 3], [24, 2], [2, 1], [74, 5], [117, 3], [19, 3], [6, 3], [26, 3], [45, 5], [25, 3], [86, 4], [28, 4], [159, 7], [14, 3], [35, 4], [25, 2], [18, 5], [34, 5], [1167, 110]];
const TICKS = VOLS.map(([v, n], i) => ({ time: i < 17 ? '14:56' : i === 17 ? '14:57' : '15:00', v, n, up: i === 18 }));

function QuotePanel() {
  return (
    <aside className="flex w-[387px] shrink-0 flex-col">
      <div className="flex h-9 items-center font-['Liberation_Serif','Noto_Serif_CJK_SC','Noto_Sans_CJK_SC',serif] text-[32px] leading-none font-bold text-[#16d8e8]">
        <h1 className="flex-1 pl-5 text-center whitespace-nowrap"><span className="text-[34px]">银宝山新</span> 002786</h1>
        <button aria-label="设置" className="mr-1 text-[22px] text-[#6e6e6e]"><FaCog /></button>
      </div>
      <div className="border-l border-[#8c0a0a]">
        <div className="flex h-[33px] items-center border-t border-[#8c0a0a] px-[2px]">
          <span className="w-[90px] text-[24px] leading-none font-light text-[#c0c0c0]">委比</span>
          <span className={`w-[100px] text-right text-[21px] text-[#ff3232] ${NUM}`}>+100.00%</span>
          <span className={`flex-1 text-right text-[21px] text-[#ff3232] ${NUM}`}>78425</span>
        </div>
        <Book side="卖盘" rows={SELL} height="h-[150px]" />
        <Book side="买盘" rows={BUY} height="h-[148px]" />
        <div className="flex h-[27px] items-center border-t border-[#8c0a0a] px-[2px] pb-[2px] whitespace-nowrap text-[#f4f470]">
          <span className="w-[172px]">在买盘9.55位置有</span>
          <span className="w-[59px] text-[#e83838]">231手</span>
          <span>买单!</span>
          <a href="#" className="ml-auto">查看详细</a>
        </div>
        <table className="h-[272px] w-full table-fixed border-t border-[#8c0a0a] text-[21px] leading-[25px]">
          <tbody>
            {STATS.map(([a, b, c, d, e, f]) => (
              <tr key={a}>
                <th className="w-[92px] p-0 pl-[2px] text-left text-[24px] leading-[25px] font-light whitespace-nowrap text-[#c0c0c0]">{a}</th>
                <td className={`w-[98px] p-0 text-right whitespace-nowrap ${c}`}><Value v={b} /></td>
                <th className="w-[95px] p-0 pl-[6px] text-left text-[24px] leading-[25px] font-light whitespace-nowrap text-[#c0c0c0]">{d}</th>
                <td className={`p-0 pr-[2px] text-right whitespace-nowrap ${f}`}><Value v={e} /></td>
              </tr>
            ))}
          </tbody>
        </table>
        <div className="flex h-[30px] items-center border-t border-[#8c0a0a] text-[#c0c0c0]">
          <span className="pl-[2px]">专用设备</span>
          <span className="mr-[7px] ml-auto text-[20px] text-[#12b412]">-0.75%</span>
          <button className="h-full w-[119px] border-l border-[#8c0a0a]">同行业比较</button>
        </div>
        <table className={`h-[521px] w-full table-fixed border-y border-[#8c0a0a] text-[21px] leading-[25px] ${NUM}`}>
          <tbody>
            {TICKS.map((t, i) => (
              <tr key={i} className={t.up ? 'bg-[#3a3a3e]' : ''}>
                <td className="w-[90px] p-0 pl-[2px] text-[#c0c0c0]">{t.time}</td>
                <td className="w-[103px] p-0 text-right text-[#ff3232]">9.64</td>
                <td className={`w-[98px] p-0 text-right ${t.up ? R : G}`}>{t.v}</td>
                <td className="w-[27px] p-0 pl-[5px]">
                  {t.up ? (
                    <svg viewBox="0 0 16 16" className="block h-[17px] w-[17px] fill-[#ff3232]"><path d="M8 0l8 9h-4v7H4V9H0z" /></svg>
                  ) : (
                    <svg viewBox="0 0 16 16" className="block h-[17px] w-[17px] fill-[#12e612]"><path d="M8 16L0 7h4V0h8v7h4z" /></svg>
                  )}
                </td>
                <td className="p-0 text-right text-[#1fd6e6]">{t.n}</td>
              </tr>
            ))}
          </tbody>
        </table>
      </div>
      <div className="mt-auto mb-[2px] flex h-[23px] pl-[3px] text-black">
        <button className="w-[49px] bg-[#8b0000] text-white [clip-path:polygon(0_0,100%_0,calc(100%-11px)_100%,10px_100%)]">细</button>
        {['诊', '分', '筹', '焰', '指', '财'].map((t, i) => (
          <button
            key={t}
            className={
              i === 0
                ? '-mr-[3px] -ml-[5px] w-[37px] bg-[#8e8e8e] [clip-path:polygon(6px_0,calc(100%-5px)_0,100%_50%,calc(100%-5px)_100%,5px_100%,0_50%)]'
                : i === 5
                  ? 'w-[49px] bg-[#8e8e8e] [clip-path:polygon(0_0,100%_0,calc(100%-10px)_100%,11px_100%)]'
                  : `-mr-1 w-[43px] bg-[#8e8e8e] pl-1 ${SLANT}`
            }
          >
            {t}
          </button>
        ))}
      </div>
    </aside>
  );
}

// ---------- bottom ----------
const INDEXES = [{ n: '沪', cells: 4 }, { n: '深', cells: 4 }, { n: '创', cells: 4 }, { n: '中小板指', cells: 2 }];

function IndexRow() {
  return (
    <div className="grid h-[29px] grid-cols-[556fr_557fr_556fr_491fr] border-t border-[#8c0a0a] text-[20px] text-[#c0c0c0]">
      {INDEXES.map(({ n, cells }, i) => (
        <div key={n} className={`flex items-center ${i ? 'border-l border-[#8c0a0a]' : ''}`}>
          <span className="pr-1 pl-[6px] whitespace-nowrap">{n}</span>
          {[0, 1, 2, 3].map((k) => <span key={k} className="flex-1 text-center text-[12px]">{k < cells && '—'}</span>)}
        </div>
      ))}
    </div>
  );
}

const LINKS = [
  { t: '留言', w: 'w-[47px]' }, { t: '解盘', w: 'w-[48px]' }, { t: '股市日记', w: 'w-[84px]' }, { t: '股灵通', w: 'w-[66px]' },
  { t: '行情', w: 'w-[46px]' }, { t: '7*24小时', w: 'w-[84px]' }, { t: '智能助手', w: 'w-[84px]' },
];

function Ticker() {
  return (
    <div className="flex h-7 border-y border-[#8c0a0a] text-[#c8c8c8]">
      {LINKS.map((l) => (
        <a key={l.t} href="#" className={`flex shrink-0 items-center justify-center border-r border-[#8c0a0a] whitespace-nowrap ${l.w}`}>{l.t}</a>
      ))}
      <div className="flex min-w-0 flex-1 items-center overflow-hidden text-[19px] font-bold whitespace-nowrap text-[#f6f620]">
        <span className="w-[454px] shrink-0">选人参与角逐 斯里兰卡开始总统选举投票</span>
        <span className="w-[513px] shrink-0">09:18 中方对黎以局势可能进一步升级深表担忧</span>
        <span className="shrink-0">09:04 以色列被指制造黎巴嫩寻呼机</span>
      </div>
      <input
        aria-label="键盘精灵"
        placeholder="代码/名称/简拼/功能"
        className="w-[422px] shrink-0 border border-[#a01010] bg-[#c0c0c0] pl-[5px] font-['Liberation_Mono','Noto_Sans_CJK_SC',monospace] text-[18px] leading-none placeholder:text-black"
      />
    </div>
  );
}

function InputMethodBar() {
  return (
    <div className="absolute right-[277px] bottom-[11px] flex h-[33px] w-[75px] items-center bg-[#fbfbfb]">
      <span className="ml-[6px] h-[30px] border-l-3 border-dotted border-[#c4c4c4]" />
      <svg viewBox="0 0 26 26" className="ml-2 h-[26px] w-[26px] fill-none">
        <path fill="#f0512a" d="M2 5l20-4 3 19-20 5z" />
        <path stroke="#fff" strokeWidth="3" d="M19 7c-4-1-10 0-10 3s9 2 9 5-6 4-11 3" />
      </svg>
      <svg viewBox="0 0 14 26" className="ml-[13px] h-[26px] w-[14px] fill-none stroke-[#7a8490] stroke-2">
        <rect x="1" y="3" width="12" height="6" rx="3" />
        <path d="M2 19v4h10v-4" />
      </svg>
    </div>
  );
}

function SiteBadge() {
  return (
    <div className="absolute right-[2px] bottom-[2px] h-[55px] w-[220px] bg-white px-1 pt-1 whitespace-nowrap">
      <div className="flex items-center gap-2">
        <span className="text-[20px] leading-[25px] font-black text-[#0a0af0]">股海网</span>
        <span className="flex text-[16px] leading-[18px] italic text-[#222]">
          {'股票软件资源分享'.split('').map((c) => (
            <span key={c} className="w-[18px] border border-r-0 border-[#ddd] text-center">{c}</span>
          ))}
        </span>
      </div>
      <p className="font-['DejaVu_Sans',sans-serif] text-[19px] leading-[24px] font-bold text-[#ff3a00]">Www.Guhai.com.cn</p>
    </div>
  );
}

export default function App() {
  return (
    <div className={`relative overflow-hidden bg-black text-[18px] leading-none ${SANS}`}>
      <TitleBar />
      <Toolbar />
      <main className="flex">
        <SideTabs />
        <section className="min-w-0 flex-1">
          <ChartHeader />
          <KChart />
          <IndicatorHeader />
          <IndicatorChart />
          <FormulaTabs />
        </section>
        <QuotePanel />
      </main>
      <IndexRow />
      <Ticker />
      <div className="h-[10px] bg-[#12283f]" />
      <InputMethodBar />
      <SiteBadge />
    </div>
  );
}
